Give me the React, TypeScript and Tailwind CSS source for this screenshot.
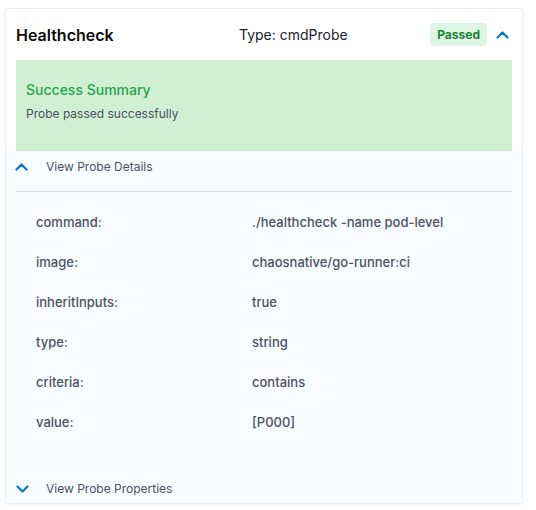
import React from 'react'

type Row = { label: string; value: string }

const rows: Row[] = [
  { label: 'command:', value: './healthcheck -name pod-level' },
  { label: 'image:', value: 'chaosnative/go-runner:ci' },
  { label: 'inheritInputs:', value: 'true' },
  { label: 'type:', value: 'string' },
  { label: 'criteria:', value: 'contains' },
  { label: 'value:', value: '[P000]' },
]

function Chevron({ up }: { up?: boolean }) {
  return (
    <svg width="13" height="8" viewBox="0 0 13 8" fill="none" className="shrink-0">
      <polyline
        points={up ? '1.5,6.5 6.5,1.5 11.5,6.5' : '1.5,1.5 6.5,6.5 11.5,1.5'}
        stroke="#0278d5"
        strokeWidth="2.2"
        strokeLinecap="round"
        strokeLinejoin="round"
      />
    </svg>
  )
}

export default function App() {
  return (
    <div className="pl-[5px] pt-[8px] font-['Inter',sans-serif] bg-white min-h-[510px]">
      <div className="w-[518px] border border-[#eceef4] rounded-[2px] bg-white shadow-[0_1px_2px_rgba(96,97,112,0.08)]">
        {/* Header */}
        <div className="h-[51px] flex items-center px-[10px]">
          <div className="w-[223px] text-[16px] font-semibold text-[#0b0b0d]">Healthcheck</div>
          <div className="flex-1 text-[14px] text-[#22222a]">Type: cmdProbe</div>
          <span className="h-[23px] px-[7px] flex items-center rounded-[4px] bg-[#dcf6e1] text-[12px] font-bold text-[#1b7f37]">
            Passed
          </span>
          <span className="ml-[9px] mr-[3px]">
            <Chevron up />
          </span>
        </div>

        {/* Summary */}
        <div className="mx-[10px] h-[91px] bg-[#d1f0d3] px-[10px] pt-[20px]">
          <div className="text-[14px] leading-[20px] font-medium text-[#27a449]">Success Summary</div>
          <div className="mt-[6px] text-[12px] leading-[16px] text-[#4f5162]">Probe passed successfully</div>
        </div>

        {/* Details */}
        <div className="bg-[#f8fbff] px-[10px]">
          <div className="h-[32px] flex items-center">
            <span className="ml-[-1px]">
              <Chevron up />
            </span>
            <span className="ml-[18px] text-[12px] text-[#4f5162]">View Probe Details</span>
          </div>
          <div className="mt-[8px] border-t border-[#d9dae5]" />
          <div className="pt-[11px] pl-[20px]">
            {rows.map((r) => (
              <div key={r.label} className="h-[40px] flex items-center text-[13px] font-medium text-[#4f5162]">
                <span className="w-[216px]">{r.label}</span>
                <span>{r.value}</span>
              </div>
            ))}
          </div>
          <div className="mt-[32px] h-[28px] flex items-center">
            <span>
              <Chevron />
            </span>
            <span className="ml-[17px] text-[12px] text-[#4f5162]">View Probe Properties</span>
          </div>
        </div>
      </div>
    </div>
  )
}
